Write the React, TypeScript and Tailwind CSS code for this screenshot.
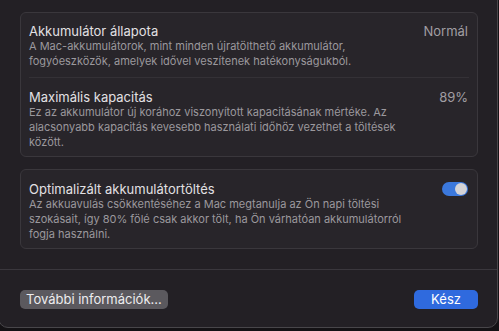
import React from "react";

const font = { fontFamily: "Inter, 'Noto Sans', sans-serif" };

function Row({ title, value, desc, last }: { title: string; value?: React.ReactNode; desc: string[]; last?: boolean }) {
  return (
    <div className={`flex items-start justify-between pl-[8px] pr-[9px] ${last ? "pt-[11px] pb-[6px]" : "pt-[10px] pb-[8px]"}`}>
      <div className="flex flex-col">
        <span className="text-[13px] leading-[16px] text-[#e2e0e3]">{title}</span>
        <div className="text-[11px] leading-[15px] text-[#9b989d]">
          {desc.map((l) => (
            <div key={l}>{l}</div>
          ))}
        </div>
      </div>
      {value}
    </div>
  );
}

export default function App() {
  return (
    <div className="w-[499px] h-[331px] overflow-hidden bg-[#141215]" style={font}>
      <div className="-ml-[2px] -mt-[10px] w-[500px] h-[338px] rounded-[10px] border border-[#48464a] bg-[#232025] flex flex-col">
        <div className="pt-[21px] pl-[21px] pr-[19px] flex flex-col gap-[12px]">
          <div className="rounded-[6px] border border-[#3a373c] bg-[#28252a] flex flex-col">
            <Row
              title="Akkumulátor állapota"
              value={<span className="text-[13px] leading-[16px] text-[#a19ea3]">Normál</span>}
              desc={[
                "A Mac-akkumulátorok, mint minden újratölthető akkumulátor,",
                "fogyóeszközök, amelyek idővel veszítenek hatékonyságukból.",
              ]}
            />
            <div className="mx-[8px] h-px bg-[#343136]" />
            <Row
              last
              title="Maximális kapacitás"
              value={<span className="text-[13px] leading-[16px] text-[#a19ea3]">89%</span>}
              desc={[
                "Ez az akkumulátor új korához viszonyított kapacitásának mértéke. Az",
                "alacsonyabb kapacitás kevesebb használati időhöz vezethet a töltések",
                "között.",
              ]}
            />
          </div>
          <div className="rounded-[6px] border border-[#3a373c] bg-[#28252a] flex flex-col">
            <Row
              last
              title="Optimalizált akkumulátortöltés"
              value={
                <div className="mt-[1px] w-[26px] h-[14px] rounded-full bg-[#3b78dc] flex items-center justify-end pr-[1px]">
                  <div className="w-[12px] h-[12px] rounded-full bg-[#d4d3d6]" />
                </div>
              }
              desc={[
                "Az akkuavulás csökkentéséhez a Mac megtanulja az Ön napi töltési",
                "szokásait, így 80% fölé csak akkor tölt, ha Ön várhatóan akkumulátorról",
                "fogja használni.",
              ]}
            />
          </div>
        </div>
        <div className="mt-[20px] border-t border-[#3a373d]" />
        <div className="pt-[20px] pl-[21px] pr-[19px] flex justify-between">
          <button className="h-[19px] px-[6px] rounded-[5px] bg-[#5b595e] text-[13px] leading-[19px] text-[#ececee]">
            További információk...
          </button>
          <button className="h-[19px] w-[64px] rounded-[5px] bg-[#2f6ade] text-[13px] leading-[19px] text-white">
            Kész
          </button>
        </div>
      </div>
    </div>
  );
}
